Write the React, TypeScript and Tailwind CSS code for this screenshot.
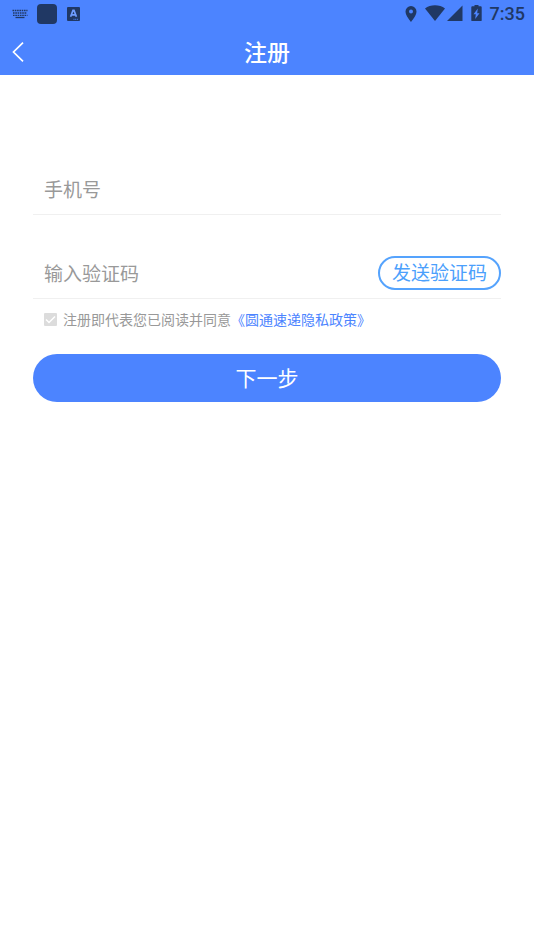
import React, { useState } from 'react';

function StatusBar() {
  return (
    <div className="flex h-7 items-center justify-between pl-3 pr-[9px] text-[#203864]">
      <div className="flex items-center">
        {/* keyboard */}
        <svg width="16" height="10" viewBox="0 0 16 10" fill="none" stroke="currentColor" aria-hidden="true">
          <path d="M0.5 1.5h15" strokeWidth="1.4" strokeDasharray="1.6 0.7" />
          <path d="M1 4h14" strokeWidth="1.5" strokeDasharray="1.6 0.7" />
          <path d="M1 6.300h14.500" strokeWidth="1.300" strokeDasharray="1.600 0.700" />
          <path d="M3.500 8.500h9" strokeWidth="1.300" />
        </svg>
        <span className="ml-[9px] size-5 rounded bg-[#203864]" />
        {/* input method badge */}
        <svg className="ml-2.5" width="13" height="14" viewBox="0 0 13 14" aria-hidden="true">
          <rect width="13" height="14" rx="1" fill="currentColor" />
          <path d="M3.600 9.800 6 3.400h1l2.400 6.400M4.400 7.800h4.200" fill="none" stroke="#6f9dff" strokeWidth="1.700" />
          <path d="M6.500 12.300h5" stroke="#4c84ff" strokeWidth="1" strokeDasharray="1 0.700" />
        </svg>
      </div>
      <div className="flex items-center">
        {/* location */}
        <svg width="12" height="16" viewBox="0 0 12 16" fill="currentColor" aria-hidden="true">
          <path
            fillRule="evenodd"
            d="M6 0a5.500 5.500 0 0 0-5.500 5.600C.5 9.800 6 16 6 16s5.500-6.200 5.500-10.400A5.500 5.500 0 0 0 6 0Zm0 3.600a2 2 0 1 1 0 4 2 2 0 0 1 0-4Z"
          />
        </svg>
        {/* wifi */}
        <svg className="ml-2" width="20" height="18" viewBox="0 0 20 18" fill="currentColor" aria-hidden="true">
          <path d="M10 16 0 3.500C2.800 1.400 6.200.3 10 .3s7.200 1.100 10 3.200Z" />
        </svg>
        {/* signal */}
        <svg className="ml-px" width="17" height="18" viewBox="0 0 17 18" fill="currentColor" aria-hidden="true">
          <path d="M16.500 .5v15.500H1Z" />
        </svg>
        {/* battery */}
        <svg className="ml-2" width="11" height="18" viewBox="0 0 11 18" fill="currentColor" aria-hidden="true">
          <path
            fillRule="evenodd"
            d="M3.500 0h4v1.300h2.300c.5 0 .9.400.9.900v13c0 .5-.4.900-.9.900H1.200a.9.900 0 0 1-.9-.9v-13c0-.5.4-.9.9-.9h2.300ZM6.800 3.500 2.500 9.200h2.300L4.200 14.100l4.300-5.900H6.200Z"
          />
        </svg>
        <span className="ml-2 font-[Roboto,sans-serif] text-[18px] leading-6 font-medium">7:35</span>
      </div>
    </div>
  );
}

export default function App() {
  const [phone, setPhone] = useState('');
  const [code, setCode] = useState('');
  const [agreed, setAgreed] = useState(true);

  return (
    <div className="min-h-screen bg-white font-['Noto_Sans_CJK_SC',sans-serif]">
      <header className="bg-[#4c84ff]">
        <StatusBar />
        <div className="grid h-[47px] grid-cols-[1fr_auto_1fr] items-center text-white">
          <button type="button" aria-label="返回" className="w-9 pl-3">
            <svg width="13" height="20" viewBox="0 0 13 20" fill="none" stroke="currentColor" strokeWidth="1.7" aria-hidden="true">
              <path d="M11 0.700 1.500 10l9.500 9.300" />
            </svg>
          </button>
          <h1 className="pb-0.5 text-[23px] leading-8 font-medium">注册</h1>
        </div>
      </header>

      <form className="px-[33px] pt-14" onSubmit={(e) => e.preventDefault()}>
        <div className="flex h-21 items-end border-b border-[#f0f0f0]">
          <input
            type="tel"
            aria-label="手机号"
            placeholder="手机号"
            value={phone}
            onChange={(e) => setPhone(e.target.value)}
            className="h-12 w-full px-[11px] pb-1 text-[19px] text-[#333] outline-none placeholder:text-[#999]"
          />
        </div>

        <div className="flex h-21 items-end border-b border-[#f0f0f0]">
          <input
            type="text"
            aria-label="输入验证码"
            placeholder="输入验证码"
            value={code}
            onChange={(e) => setCode(e.target.value)}
            className="h-12 min-w-0 flex-1 px-[11px] pb-1 text-[19px] text-[#333] outline-none placeholder:text-[#999]"
          />
          <button
            type="button"
            className="mb-2 h-[34px] shrink-0 rounded-full border-2 border-[#55a3fd] px-3 pb-0.5 text-[19px] leading-7 text-[#4ba0fc]"
          >
            发送验证码
          </button>
        </div>

        <div className="flex h-10 items-center px-[11px] text-[14px] leading-5 text-[#999]">
          <label className="flex items-center">
            <span className="relative mr-1.5 size-[13px]">
              <input
                type="checkbox"
                checked={agreed}
                onChange={(e) => setAgreed(e.target.checked)}
                className="block size-[13px] appearance-none rounded-[1px] bg-[#dcdcdc]"
              />
              {agreed && (
                <svg
                  className="pointer-events-none absolute inset-0"
                  width="13"
                  height="13"
                  viewBox="0 0 13 13"
                  fill="none"
                  stroke="#fff"
                  strokeWidth="1.5"
                  aria-hidden="true"
                >
                  <path d="m2 6.500 3 3 6-6" />
                </svg>
              )}
            </span>
            注册即代表您已阅读并同意
          </label>
          <a href="#privacy" className="text-[#4c84ff]">《圆通速递隐私政策》</a>
        </div>

        <button
          type="submit"
          className="mt-[15px] h-12 w-full rounded-full bg-[#4c84ff] pb-0.5 text-[21px] leading-8 text-white"
        >
          下一步
        </button>
      </form>
    </div>
  );
}
